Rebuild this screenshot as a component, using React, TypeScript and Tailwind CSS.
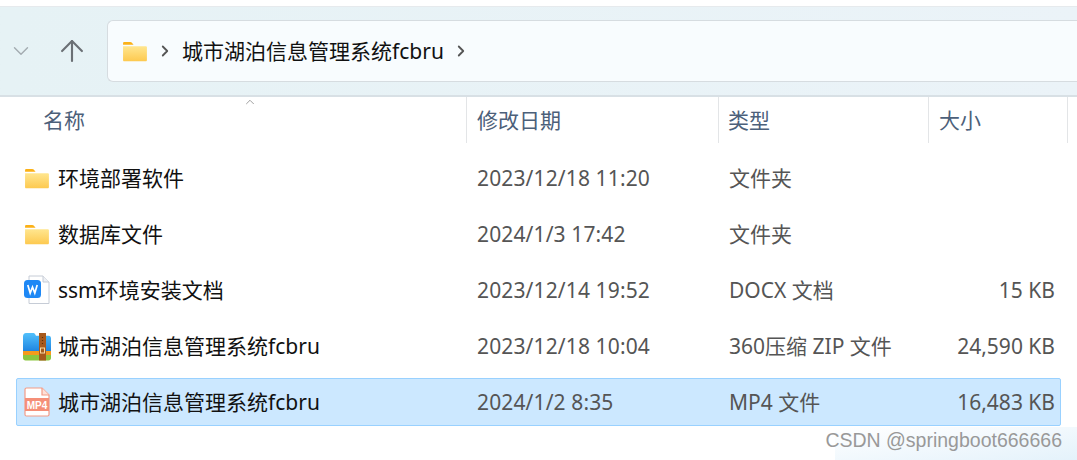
import React from 'react';
import { ChevronDown, ChevronRight, ChevronUp, ArrowUp } from 'lucide-react';

const FONT = 'font-["Noto_Sans","Noto_Sans_CJK_SC",sans-serif]';

const FolderIcon = () => (
  <svg width="25" height="21" viewBox="0 0 26 22">
    <defs>
      <linearGradient id="folderFill" x1="0" y1="0" x2="0" y2="1">
        <stop offset="0" stopColor="#ffe68f" />
        <stop offset="1" stopColor="#fdc94f" />
      </linearGradient>
    </defs>
    <path d="M1 2.500C1 1.400 1.600 1 2.500 1h6c.8 0 1.300.3 1.800.9L12 4H1z" fill="#fbb117" />
    <path d="M1 5.500h24c.6 0 1 .4 1 1V20c0 .8-.5 1.300-1.200 1.300H2C1.400 21.300 1 20.800 1 20z" fill="url(#folderFill)" />
  </svg>
);

const WordIcon = () => (
  <svg width="28" height="30" viewBox="0 0 28 30">
    <path d="M6 1h14l6 6v21.500H6z" fill="#fff" stroke="#c6ccd6" strokeWidth="1" />
    <path d="M20 1v6h6" fill="#eef0f4" stroke="#c6ccd6" strokeWidth="1" />
    <rect x="1" y="5" width="17" height="18" rx="3.500" fill="#1e88f5" />
    <path d="M4.800 10l2.400 8 2.300-6 2.300 6 2.400-8" fill="none" stroke="#fff" strokeWidth="1.700" />
  </svg>
);

const ZipIcon = () => (
  <svg width="30" height="29" viewBox="0 0 30 29">
    <defs>
      <linearGradient id="zipBlue" x1="0" y1="0" x2="0" y2="1">
        <stop offset="0" stopColor="#52c0fb" />
        <stop offset="1" stopColor="#1c82e0" />
      </linearGradient>
    </defs>
    <path d="M1 4.500C1 2.500 2.200 1 4 1h7c1 0 1.500.4 2 1l1 1.800h12.500C28.300 3.800 29 5 29 6.500V20H1z" fill="url(#zipBlue)" />
    <rect x="1" y="19" width="28" height="4" fill="#f59a1c" />
    <path d="M1 23h28v3c0 1.500-1 2.500-2.500 2.500h-23C2 28.500 1 27.500 1 26z" fill="#8cc63f" />
    <rect x="17" y="1" width="7" height="27.500" fill="#a75a1d" />
    <rect x="18.500" y="16" width="4" height="5" fill="none" stroke="#f7d9a0" strokeWidth="1" />
    <path d="M20.500 5v1M20.500 8v1M20.500 11v1" stroke="#5e3008" strokeWidth="1.200" />
  </svg>
);

const Mp4Icon = () => (
  <svg width="26" height="30" viewBox="0 0 26 30">
    <path d="M1 2.500C1 1.500 1.500 1 2.500 1H18l7 7v19.500c0 1-.5 1.500-1.500 1.500h-21C1.500 29 1 28.500 1 27.500z" fill="#fff" stroke="#f49b86" strokeWidth="1.200" />
    <path d="M18 1v7h7" fill="#fde0d8" stroke="#f49b86" strokeWidth="1.200" />
    <rect x="1" y="11" width="24" height="13" fill="#f58f78" />
    <text x="13" y="21.500" textAnchor="middle" fontSize="10" fontWeight="700" fill="#fff" fontFamily="Liberation Sans, sans-serif">MP4</text>
  </svg>
);

const rows = [
  { icon: <FolderIcon />, name: '环境部署软件', date: '2023/12/18 11:20', type: '文件夹', size: '' },
  { icon: <FolderIcon />, name: '数据库文件', date: '2024/1/3 17:42', type: '文件夹', size: '' },
  { icon: <WordIcon />, name: 'ssm环境安装文档', date: '2023/12/14 19:52', type: 'DOCX 文档', size: '15 KB' },
  { icon: <ZipIcon />, name: '城市湖泊信息管理系统fcbru', date: '2023/12/18 10:04', type: '360压缩 ZIP 文件', size: '24,590 KB' },
  { icon: <Mp4Icon />, name: '城市湖泊信息管理系统fcbru', date: '2024/1/2 8:35', type: 'MP4 文件', size: '16,483 KB', selected: true },
];

const App: React.FC = () => {
  return (
    <div className={`${FONT} relative w-[1077px] h-[460px] overflow-hidden bg-white text-[21px] leading-[28px]`}>
      {/* Toolbar */}
      <div className="mt-[6px] h-[91px] flex items-start border-t border-b-2 border-t-[#e6eaed] border-b-[#d8e0e5] bg-gradient-to-r from-[#e6f2f5] to-[#ebf3f8]">
        <div className="w-[104px] h-full shrink-0 flex items-center">
          <ChevronDown className="ml-[8px] text-[#a3abb0]" size={26} strokeWidth={1.300} />
          <ArrowUp className="ml-[21px] text-[#6b7075]" size={34} strokeWidth={1.500} />
        </div>
        <div className="mt-[13px] h-[62px] ml-[3px] flex-1 flex items-center rounded-l-[6px] border border-r-0 border-[#d6dce0] bg-[#f8fcfe] text-[#111]">
          <span className="ml-[14px] flex"><FolderIcon /></span>
          <ChevronRight className="ml-[9px] text-[#555]" size={18} strokeWidth={2.400} />
          <span className="ml-[8px]">城市湖泊信息管理系统fcbru</span>
          <ChevronRight className="ml-[8px] text-[#555]" size={18} strokeWidth={2.400} />
        </div>
      </div>

      {/* Column headers */}
      <div className="relative flex h-[46px] text-[#4c607a]">
        <ChevronUp className="absolute left-[243px] -top-[2px] text-[#777]" size={14} strokeWidth={1.200} />
        <div className="w-[466px] pl-[43px] pt-[9px]">名称</div>
        <div className="w-[252px] pl-[10px] pt-[9px] border-l border-[#e3e5e7]">修改日期</div>
        <div className="w-[210px] pl-[9px] pt-[9px] border-l border-[#e3e5e7]">类型</div>
        <div className="w-[140px] pl-[10px] pt-[9px] border-x border-[#e3e5e7]">大小</div>
      </div>

      {/* File rows */}
      <div className="mt-[11px] flex flex-col gap-[8px] pl-[16px] w-[1061px]">
        {rows.map((row, i) => (
          <div
            key={i}
            className={`flex items-center h-[48px] border rounded-[2px] ${row.selected ? 'bg-[#cce8ff] border-[#99d1ff]' : 'border-transparent'}`}
          >
            <div className="w-[41px] h-full shrink-0 flex items-center justify-center pr-[2px]">{row.icon}</div>
            <div className="w-[419px] shrink-0 text-[#111]">{row.name}</div>
            <div className="w-[252px] shrink-0 tracking-[0.13px] text-[#555]">{row.date}</div>
            <div className="flex-1 text-[#555]">{row.type}</div>
            <div className="w-[140px] shrink-0 pr-[5px] text-right text-[#555]">{row.size}</div>
          </div>
        ))}
      </div>

      {/* Watermark */}
      <div className="absolute right-0 top-[427px] w-[242px] h-[33px] bg-gradient-to-br from-white to-[#e4f2fb]" />
      <div className="absolute right-[15px] top-[427px] font-['Liberation_Sans',sans-serif] text-[19.5px] leading-[26px] text-[#999]">
        CSDN @springboot666666
      </div>
    </div>
  );
};

export default App;
